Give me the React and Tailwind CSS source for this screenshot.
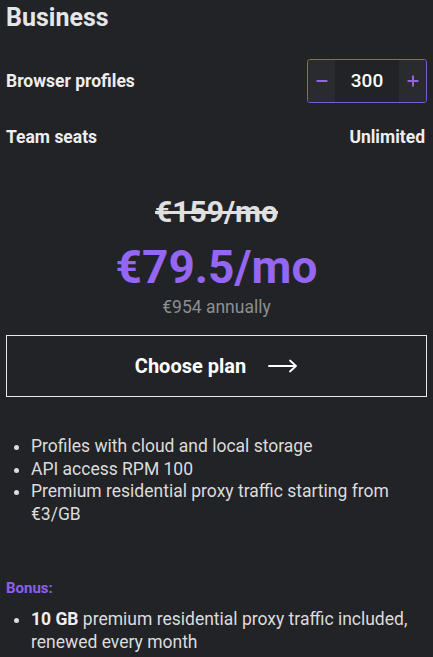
import { Minus, Plus } from "lucide-react";

const FEATURES = [
  "Profiles with cloud and local storage",
  "API access RPM 100",
  "Premium residential proxy traffic starting from €3/GB",
];

export default function App() {
  return (
    <div className="min-h-screen bg-[#222326] text-[#eeeeee] px-[6px] font-['Roboto',sans-serif]">
      <h1 className="pt-[3px] text-[25px] font-bold leading-[30px] text-[#e6e6e6]">Business</h1>

      <div className="mt-[26px] flex items-center justify-between">
        <span className="text-[17.5px] font-bold">Browser profiles</span>
        <div className="flex h-[44px] w-[120px] items-stretch rounded-[3px] border border-[#7c5ad6] overflow-hidden">
          <button className="flex w-[27px] items-center justify-center bg-[#2a2b2e] text-[#8f63ee]">
            <Minus size={16} strokeWidth={3} />
          </button>
          <div className="flex flex-1 items-center justify-center text-[19px] font-medium text-white">300</div>
          <button className="flex w-[27px] items-center justify-center bg-[#2a2b2e] text-[#8f63ee]">
            <Plus size={16} strokeWidth={3} />
          </button>
        </div>
      </div>

      <div className="mt-[24px] flex items-center justify-between text-[17.5px] leading-[21px] font-bold">
        <span>Team seats</span>
        <span className="pr-[2px]">Unlimited</span>
      </div>

      <div className="mt-[47px] flex flex-col items-center">
        <span className="text-[30px] font-bold leading-[34px] text-[#e0e0e0] line-through">€159/mo</span>
        <span className="mt-[12px] text-[46px] font-bold leading-[52px] text-[#9466f2]">€79.5/mo</span>
        <span className="mt-[3px] text-[17.5px] leading-[22px] text-[#8d8e92]">€954 annually</span>
      </div>

      <button className="mt-[17px] flex h-[62px] w-full items-center justify-center gap-[22px] border border-[#e8e8e8] text-[20px] font-bold text-white">
        Choose plan
        <svg width="30" height="14" viewBox="0 0 30 14" fill="none" stroke="currentColor" strokeWidth="1.8" strokeLinecap="round" strokeLinejoin="round">
          <path d="M1 7h27M22 1.5l6 5.5-6 5.5" />
        </svg>
      </button>

      <ul className="mt-[38px] list-disc pl-[25px] text-[17.5px] leading-[22.7px] text-[#dcdcdc]">
        {FEATURES.map((f) => (
          <li key={f}>{f}</li>
        ))}
      </ul>

      <div className="mt-[52px] text-[15px] leading-[20px] font-bold text-[#8c5ff0]">Bonus:</div>
      <ul className="mt-[10px] list-disc pl-[25px] text-[17.5px] leading-[22.7px] text-[#dcdcdc]">
        <li>
          <span className="font-bold text-[#eeeeee]">10 GB</span> premium residential proxy traffic included, renewed every month
        </li>
      </ul>
    </div>
  );
}
